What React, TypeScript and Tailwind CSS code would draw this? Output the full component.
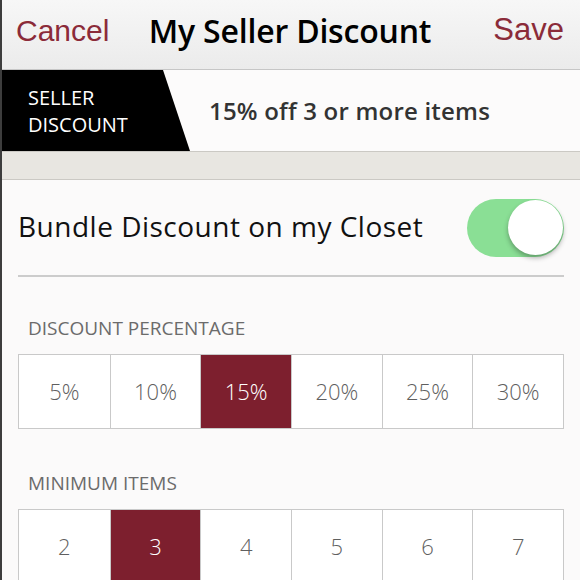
import React from 'react';

const percentages = ['5%', '10%', '15%', '20%', '25%', '30%'];
const minItems = ['2', '3', '4', '5', '6', '7'];

const body = { fontFamily: '"Open Sans", Lato, sans-serif' };
const iosFont = { fontFamily: '"Liberation Sans", Arial, sans-serif' };

function Segmented({ options, value }: { options: string[]; value: string }) {
  return (
    <div className="grid grid-cols-6 border border-[#c9c9c9] bg-white">
      {options.map((opt, i) => {
        const active = opt === value;
        return (
          <div
            key={opt}
            className={
              'flex h-[73px] items-center justify-center text-[22px] font-light ' +
              (i > 0 ? 'border-l border-[#c9c9c9] ' : '') +
              (active ? 'bg-[#7d1f2e] text-white' : 'text-[#5f5f5f]')
            }
          >
            {opt}
          </div>
        );
      })}
    </div>
  );
}

export default function App() {
  return (
    <div className="h-[580px] w-[580px] overflow-hidden border-l-2 border-[#3d3d3d] bg-[#fbfafa]" style={body}>
      {/* nav bar */}
      <div className="grid h-[70px] grid-cols-[1fr_auto_1fr] items-center border-b border-[#c6c6c6] bg-gradient-to-b from-[#f7f7f7] to-[#ebebeb] pl-[14px] pr-[16px] pb-[8px]">
        <span className="text-[30px] text-[#8b2b39]" style={iosFont}>
          Cancel
        </span>
        <span className="text-[32px] font-semibold tracking-[-0.2px] text-black">My Seller Discount</span>
        <span className="justify-self-end text-[31px] text-[#8b2b39]" style={iosFont}>
          Save
        </span>
      </div>

      {/* seller discount banner */}
      <div className="flex h-[81px] items-center bg-[#fcfbfb]">
        <div className="flex h-full w-[188px] flex-col justify-center bg-black pl-[26px] text-[20px] leading-[27px] text-white [clip-path:polygon(0_0,161px_0,188px_100%,0_100%)]">
          <span>SELLER</span>
          <span>DISCOUNT</span>
        </div>
        <span className="ml-[19px] text-[24px] font-semibold tracking-[0.2px] text-[#333]">15% off 3 or more items</span>
      </div>

      <div className="h-[29px] border-y border-[#cbc9c4] bg-[#e8e6e1]" />

      <div className="px-[16px]">
        <div className="flex h-[97px] items-center justify-between border-b-2 border-[#cccccc]">
          <span className="pb-[4px] text-[28px] tracking-[0.5px] text-[#111]">Bundle Discount on my Closet</span>
          <div className="flex h-[58px] w-[97px] items-center justify-end rounded-full bg-[#8adf95] pr-px">
            <div className="h-[55px] w-[55px] rounded-full bg-white shadow-[0_3px_5px_rgba(0,0,0,0.3)]" />
          </div>
        </div>

        <div className="pl-[10px] pt-[40px] pb-[15px] text-[19px] leading-[22px] text-[#6b6b6b]">DISCOUNT PERCENTAGE</div>
        <Segmented options={percentages} value="15%" />

        <div className="pl-[10px] pt-[43px] pb-[15px] text-[19px] leading-[22px] text-[#6b6b6b]">MINIMUM ITEMS</div>
        <Segmented options={minItems} value="3" />
      </div>
    </div>
  );
}
